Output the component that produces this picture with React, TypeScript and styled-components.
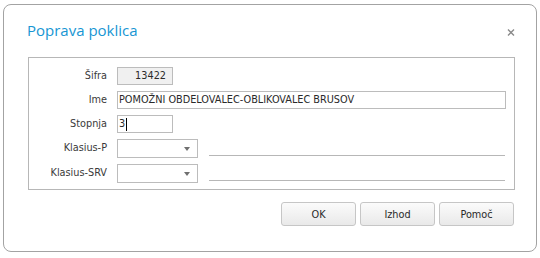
import React from "react";
import styled, { createGlobalStyle } from "styled-components";

const Global = createGlobalStyle`
  html, body { margin: 0; padding: 0; background: #ffffff; }
  body { font-family: "DejaVu Sans Condensed", "DejaVu Sans", sans-serif; }
`;

const Page = styled.div`
  padding: 4px 3px 0 3px;
`;

const Dialog = styled.div`
  box-sizing: border-box;
  width: 534px;
  height: 248px;
  border: 1px solid #a3a3a3;
  border-radius: 8px;
  background: #fff;
  padding: 14px 21px 0 23px;
  display: flex;
  flex-direction: column;
`;

const Header = styled.div`
  display: flex;
  align-items: center;
  justify-content: space-between;
  height: 25px;
`;

const Title = styled.div`
  font-family: "Open Sans", "Noto Sans", sans-serif;
  font-size: 15px;
  color: #1796d3;
  line-height: 20px;
  margin-top: -4px;
`;

const Close = styled.div`
  display: flex;
  margin-top: 1px;
`;

const Panel = styled.div`
  margin: 13px 0 0 1px;
  height: 133px;
  box-sizing: border-box;
  border: 1px solid #b7b7b7;
  padding: 9px 8px 0 0;
  display: grid;
  grid-template-columns: 78px 1fr;
  column-gap: 10px;
  row-gap: 6px;
  align-content: start;
`;

const Label = styled.div`
  font-size: 10.8px;
  line-height: 18px;
  text-align: right;
  color: #3a3a3a;
`;

const Field = styled.div<{ $w?: number; $ro?: boolean; $right?: boolean }>`
  box-sizing: border-box;
  height: 18px;
  width: ${(p) => (p.$w ? `${p.$w}px` : "100%")};
  border: 1px solid #bcbcbc;
  background: ${(p) => (p.$ro ? "#f0f0f0" : "#fff")};
  font-size: 10.8px;
  line-height: 16px;
  color: #2a2a2a;
  padding: ${(p) => (p.$right ? "0 6px 0 2px" : "0 1px")};
  white-space: nowrap;
  overflow: hidden;
  display: flex;
  align-items: center;
  justify-content: ${(p) => (p.$right ? "flex-end" : "flex-start")};
`;

const Caret = styled.span`
  display: inline-block;
  width: 1px;
  height: 13px;
  background: #000;
  margin-left: 1px;
`;

const ComboRow = styled.div`
  display: flex;
  align-items: flex-end;
`;

const Select = styled.div`
  box-sizing: border-box;
  width: 81px;
  height: 19px;
  border: 1px solid #bcbcbc;
  background: #fff;
  display: flex;
  align-items: center;
  justify-content: flex-end;
  padding-right: 7px;
`;

const Arrow = styled.div`
  width: 0;
  height: 0;
  border-left: 3px solid transparent;
  border-right: 3px solid transparent;
  border-top: 4px solid #707070;
`;

const Rule = styled.div`
  flex: 1;
  margin: 0 1px 2px 11px;
  border-bottom: 1px solid #b7b7b7;
`;

const Buttons = styled.div`
  display: flex;
  justify-content: flex-end;
  gap: 4px;
  margin-top: 12px;
  margin-right: 1px;
`;

const Button = styled.div`
  box-sizing: border-box;
  width: 75px;
  height: 24px;
  border: 1px solid #c6c6c6;
  border-radius: 3px;
  background: linear-gradient(#fbfbfb, #e9e9e9);
  font-size: 10.8px;
  color: #2a2a2a;
  display: flex;
  align-items: center;
  justify-content: center;
`;

export default function App() {
  return (
    <Page>
      <Global />
      <Dialog>
        <Header>
          <Title>Poprava poklica</Title>
          <Close>
            <svg width="8" height="7" viewBox="0 0 8 7">
              <path d="M1 0.5 L7 6.5 M7 0.5 L1 6.5" stroke="#8a8a8a" strokeWidth="1.4" />
            </svg>
          </Close>
        </Header>
        <Panel>
          <Label>Šifra</Label>
          <Field $w={56} $ro $right>13422</Field>
          <Label>Ime</Label>
          <Field>POMOŽNI OBDELOVALEC-OBLIKOVALEC BRUSOV</Field>
          <Label>Stopnja</Label>
          <Field $w={56}>
            3<Caret />
          </Field>
          <Label>Klasius-P</Label>
          <ComboRow>
            <Select>
              <Arrow />
            </Select>
            <Rule />
          </ComboRow>
          <Label>Klasius-SRV</Label>
          <ComboRow>
            <Select>
              <Arrow />
            </Select>
            <Rule />
          </ComboRow>
        </Panel>
        <Buttons>
          <Button>OK</Button>
          <Button>Izhod</Button>
          <Button>Pomoč</Button>
        </Buttons>
      </Dialog>
    </Page>
  );
}
